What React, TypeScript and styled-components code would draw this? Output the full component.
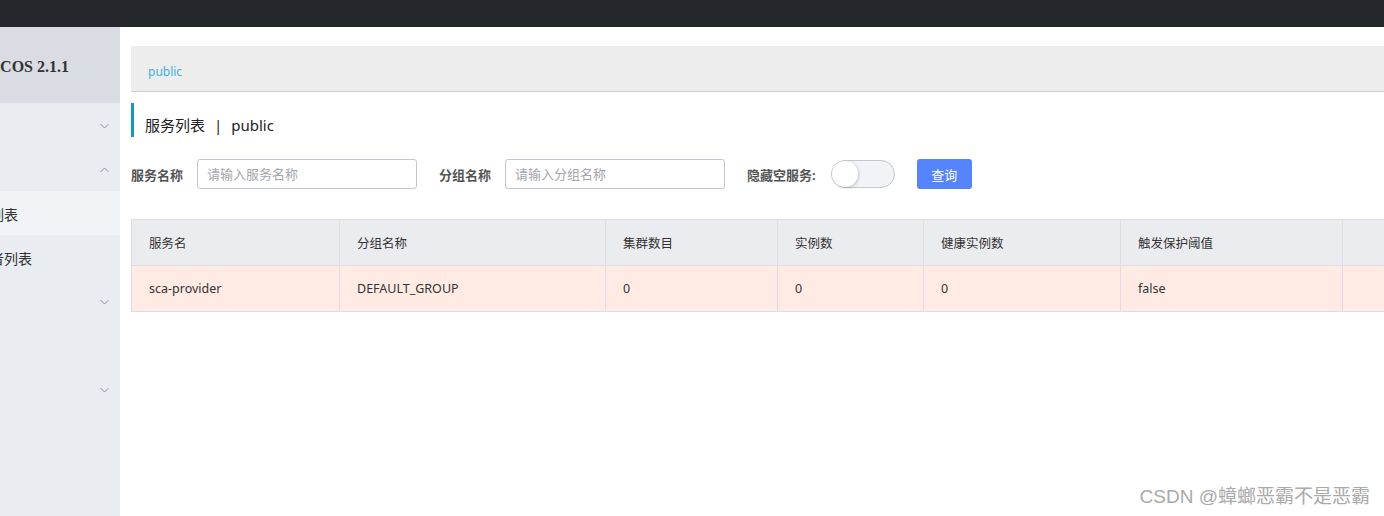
import React from "react";
import styled, { createGlobalStyle } from "styled-components";

const Global = createGlobalStyle`
  html, body { margin: 0; padding: 0; height: 100%; overflow: hidden; background: #fff; }
  #root { height: 100%; }
  * { box-sizing: border-box; }
  body { font-family: "Noto Sans", "Noto Sans CJK SC", sans-serif; color: #333; }
`;

const Page = styled.div`
  position: relative;
  height: 100vh;
  display: grid;
  grid-template-rows: 27px 1fr;
  overflow: hidden;
`;

const TopBar = styled.header`
  background: #24282c;
`;

const Body = styled.div`
  display: flex;
  min-height: 0;
`;

const Sidebar = styled.aside`
  width: 120px;
  flex: none;
  background: #e9ecf0;
  overflow: hidden;
`;

/* the side menu is scrolled horizontally: only its right part is in view */
const SidebarInner = styled.div`
  width: 200px;
  margin-left: -80px;
`;

const Logo = styled.div`
  height: 76px;
  background: #d9dde3;
  display: flex;
  align-items: center;
  padding: 3px 0 0 57px;
  font-family: "Liberation Serif", serif;
  font-weight: 700;
  font-size: 16px;
  color: #333;
  white-space: nowrap;
`;

const MenuItem = styled.div<{ $sub?: boolean; $active?: boolean }>`
  height: 44px;
  display: flex;
  align-items: center;
  justify-content: space-between;
  padding: 2px 11px 0 ${(p) => (p.$sub ? "42px" : "20px")};
  font-size: 14px;
  color: #333;
  white-space: nowrap;
  background: ${(p) => (p.$active ? "#f1f3f6" : "transparent")};
`;

const Chevron = ({ up }: { up?: boolean }) => (
  <svg width="9" height="6" viewBox="0 0 9 6" fill="none">
    <polyline
      points={up ? "0.5,5 4.5,1 8.5,5" : "0.5,1 4.5,5 8.5,1"}
      stroke="#8d929b"
      strokeWidth="1"
    />
  </svg>
);

const Main = styled.main`
  flex: 1;
  padding: 19px 0 0 11px;
  overflow: hidden;
`;

const Content = styled.div`
  width: 1320px;
`;

const Breadcrumb = styled.div`
  height: 46px;
  background: #ededed;
  border-bottom: 1px solid #cfcfcf;
  display: flex;
  align-items: center;
  padding: 5px 0 0 17px;
  font-size: 12px;
  color: #38b4da;
`;

const Title = styled.h2`
  margin: 11px 0 0;
  height: 34px;
  border-left: 3px solid #0f98cf;
  padding: 12px 0 0 11px;
  line-height: 20px;
  font-size: 15px;
  font-weight: 400;
  color: #222;
  white-space: nowrap;
`;

const Sep = styled.span`
  margin: 0 9px;
`;

const Form = styled.div`
  margin-top: 22px;
  height: 30px;
  display: flex;
  align-items: center;
`;

const FormItem = styled.div`
  display: flex;
  align-items: center;
  margin-right: 22px;
`;

const Label = styled.label`
  font-size: 13px;
  font-weight: 700;
  color: #555;
  margin-right: 14px;
  white-space: nowrap;
`;

const Input = styled.input`
  width: 220px;
  height: 30px;
  border: 1px solid #c4c6cf;
  border-radius: 3px;
  padding: 0 9px;
  font-family: inherit;
  font-size: 13px;
  color: #333;
  outline: none;
  &::placeholder { color: #a4a6ad; }
`;

const Switch = styled.div`
  width: 64px;
  height: 28px;
  margin-left: 1px;
  border-radius: 14px;
  border: 1px solid #c4c6cf;
  background: #f2f3f7;
  display: flex;
  align-items: center;
`;

const Knob = styled.div`
  width: 26px;
  height: 26px;
  border-radius: 50%;
  background: #fff;
  box-shadow: 1px 1px 3px rgba(0, 0, 0, 0.18);
`;

const Button = styled.button`
  width: 55px;
  height: 30px;
  border: none;
  border-radius: 3px;
  background: #5584ff;
  color: #fff;
  font-family: inherit;
  font-size: 13px;
  padding: 0;
`;

const Table = styled.div`
  margin-top: 30px;
  border-bottom: 1px solid #dcdee3;
`;

const Row = styled.div<{ $head?: boolean }>`
  display: grid;
  grid-template-columns: 208px 266px 172px 146px 197px 222px 109px;
  border-top: 1px solid #dcdee3;
  background: ${(p) => (p.$head ? "#ebecf0" : "#ffebe4")};
`;

const Cell = styled.div`
  height: 45px;
  border-left: 1px solid #dcdee3;
  padding: 0 17px;
  display: flex;
  align-items: center;
  font-size: 12.5px;
  color: #333;
  white-space: nowrap;
`;

const Watermark = styled.div`
  position: absolute;
  right: 14px;
  bottom: 8px;
  font-family: "Liberation Sans", "Noto Sans CJK SC", sans-serif;
  font-size: 19px;
  color: #aaaaaa;
  text-shadow: 0 0 1px rgba(255, 255, 255, 0.8);
`;

const headers = ["服务名", "分组名称", "集群数目", "实例数", "健康实例数", "触发保护阈值", ""];
const rows = [["sca-provider", "DEFAULT_GROUP", "0", "0", "0", "false", ""]];

export default function App() {
  return (
    <>
      <Global />
      <Page>
        <TopBar />
        <Body>
          <Sidebar>
            <SidebarInner>
              <Logo>NACOS 2.1.1</Logo>
              <MenuItem>
                配置管理
                <Chevron />
              </MenuItem>
              <MenuItem>
                服务管理
                <Chevron up />
              </MenuItem>
              <MenuItem $sub $active>
                服务列表
              </MenuItem>
              <MenuItem $sub>订阅者列表</MenuItem>
              <MenuItem>
                权限控制
                <Chevron />
              </MenuItem>
              <MenuItem>命名空间</MenuItem>
              <MenuItem>
                集群管理
                <Chevron />
              </MenuItem>
            </SidebarInner>
          </Sidebar>
          <Main>
            <Content>
              <Breadcrumb>public</Breadcrumb>
              <Title>
                服务列表<Sep>|</Sep>public
              </Title>
              <Form>
                <FormItem>
                  <Label>服务名称</Label>
                  <Input placeholder="请输入服务名称" />
                </FormItem>
                <FormItem>
                  <Label>分组名称</Label>
                  <Input placeholder="请输入分组名称" />
                </FormItem>
                <FormItem>
                  <Label>隐藏空服务:</Label>
                  <Switch>
                    <Knob />
                  </Switch>
                </FormItem>
                <Button>查询</Button>
              </Form>
              <Table>
                <Row $head>
                  {headers.map((h, i) => (
                    <Cell key={i}>{h}</Cell>
                  ))}
                </Row>
                {rows.map((r, i) => (
                  <Row key={i}>
                    {r.map((c, j) => (
                      <Cell key={j}>{c}</Cell>
                    ))}
                  </Row>
                ))}
              </Table>
            </Content>
          </Main>
        </Body>
        <Watermark>CSDN @蟑螂恶霸不是恶霸</Watermark>
      </Page>
    </>
  );
}
